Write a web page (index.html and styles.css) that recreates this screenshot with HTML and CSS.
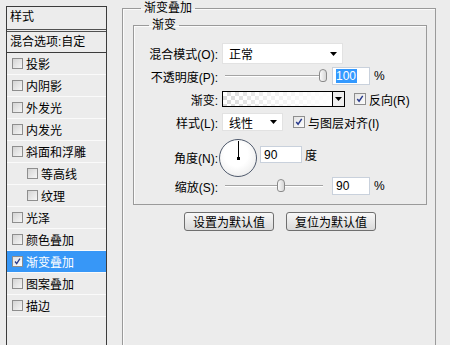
FILE: index.html
```html
<!DOCTYPE html>
<html>
<head>
    <meta charset="utf-8">
    <title>图层样式 - 渐变叠加</title>
    <link rel="stylesheet" href="styles.css">
</head>
<body>
    <div class="dialog">
        <!-- style list on the left -->
        <div class="style-list">
            <div class="list-head">样式</div>
            <div class="list-blend">混合选项:自定</div>
            <div class="list-item"><span class="check"></span>投影</div>
            <div class="list-item"><span class="check"></span>内阴影</div>
            <div class="list-item"><span class="check"></span>外发光</div>
            <div class="list-item"><span class="check"></span>内发光</div>
            <div class="list-item"><span class="check"></span>斜面和浮雕</div>
            <div class="list-item sub"><span class="check"></span>等高线</div>
            <div class="list-item sub"><span class="check"></span>纹理</div>
            <div class="list-item"><span class="check"></span>光泽</div>
            <div class="list-item"><span class="check"></span>颜色叠加</div>
            <div class="list-item active"><span class="check checked"><svg viewBox="0 0 11 11"><path d="M2.5 5.5 L4.5 8 L8.5 2" /></svg></span>渐变叠加</div>
            <div class="list-item"><span class="check"></span>图案叠加</div>
            <div class="list-item"><span class="check"></span>描边</div>
        </div>

        <!-- settings on the right -->
        <fieldset class="group outer">
            <legend>渐变叠加</legend>
            <fieldset class="group inner">
                <legend>渐变</legend>

                <div class="row r-blend">
                    <label class="lbl">混合模式(O):</label>
                    <div class="select wide">正常<svg class="arrow" viewBox="0 0 7 4"><polygon points="0,0 7,0 3.5,4" /></svg></div>
                </div>

                <div class="row r-opacity">
                    <label class="lbl">不透明度(P):</label>
                    <div class="slider"><div class="track"></div><div class="thumb" style="left: 97px"></div></div>
                    <div class="num"><span class="sel">100</span></div>
                    <span class="unit">%</span>
                </div>

                <div class="row r-gradient">
                    <label class="lbl">渐变:</label>
                    <div class="swatch"></div>
                    <div class="swatch-btn"><svg class="arrow" viewBox="0 0 7 4"><polygon points="0,0 7,0 3.5,4" /></svg></div>
                    <span class="check checked box12"><svg viewBox="0 0 11 11"><path d="M2.5 5.5 L4.5 8 L8.5 2" /></svg></span>
                    <span class="opt">反向(R)</span>
                </div>

                <div class="row r-style">
                    <label class="lbl">样式(L):</label>
                    <div class="select narrow">线性<svg class="arrow" viewBox="0 0 7 4"><polygon points="0,0 7,0 3.5,4" /></svg></div>
                    <span class="check checked box12 align"><svg viewBox="0 0 11 11"><path d="M2.5 5.5 L4.5 8 L8.5 2" /></svg></span>
                    <span class="opt">与图层对齐(I)</span>
                </div>

                <div class="row r-angle">
                    <label class="lbl">角度(N):</label>
                    <div class="dial"><div class="needle"></div><div class="hub"></div></div>
                    <div class="num angle">90</div>
                    <span class="unit">度</span>
                </div>

                <div class="row r-scale">
                    <label class="lbl">缩放(S):</label>
                    <div class="slider"><div class="track"></div><div class="thumb" style="left: 55px"></div></div>
                    <div class="num">90</div>
                    <span class="unit">%</span>
                </div>
            </fieldset>

            <div class="buttons">
                <button class="btn">设置为默认值</button>
                <button class="btn">复位为默认值</button>
            </div>
        </fieldset>
    </div>
</body>
</html>
```

FILE: styles.css
```css
* {
    box-sizing: border-box;
}

body {
    margin: 0;
    background: #ececec;
    color: #000;
    font-family: "Liberation Sans", "Noto Sans CJK SC", sans-serif;
    font-size: 12px;
    overflow: hidden;
    height: 345px;
}

.dialog {
    display: flex;
    align-items: flex-start;
    gap: 15px;
    padding-left: 6px;
}

/* ---- left list ---- */
.style-list {
    margin-top: 6px;
    width: 101px;
    height: 400px;
    border: 1px solid #3c3c3c;
    background: #ececec;
}

.list-head {
    height: 25px;
    line-height: 21px;
    padding-left: 3px;
    border-bottom: 3px double #505050;
}

.list-blend {
    height: 21px;
    line-height: 20px;
    padding-left: 3px;
    border-bottom: 1px solid #3c3c3c;
}

.list-item {
    display: flex;
    align-items: center;
    gap: 3px;
    height: 22px;
    padding-left: 5px;
    border-bottom: 1px solid #fafafa;
}

.list-item.sub {
    padding-left: 20px;
}

.list-item.active {
    background: #3797f7;
    color: #fff;
}

.check {
    display: inline-flex;
    width: 11px;
    height: 11px;
    border: 1px solid #8e8e8e;
    background: linear-gradient(135deg, #d4d4d4, #f6f6f6);
    flex: none;
}

.check svg {
    width: 100%;
    height: 100%;
    fill: none;
    stroke: #27398c;
    stroke-width: 1.6;
}

.check.checked {
    background: linear-gradient(135deg, #e4e4e4, #fcfcfc);
}

.box12 {
    width: 12px;
    height: 12px;
}

/* ---- group boxes ---- */
.group {
    margin: 0;
    border: 1px solid #9a9a9a;
    box-shadow: 1px 1px 0 #fbfbfb inset;
    min-width: 0;
}

.group legend {
    padding: 0 3px;
    line-height: 16px;
    height: 16px;
}

.outer {
    width: 314px;
    height: 420px;
    padding: 1px 8px 0 10px;
}

.outer > legend {
    margin-left: 8px;
}

.inner {
    width: 294px;
    padding: 10px 0 9px 0;
}

.inner > legend {
    margin-left: 15px;
}

/* ---- rows ---- */
.row {
    display: flex;
    align-items: center;
}

.lbl {
    width: 84px;
    margin-right: 4px;
    text-align: right;
    white-space: nowrap;
    flex: none;
}

.r-blend { height: 21px; }
.r-opacity { height: 18px; margin-top: 3px; }
.r-gradient { height: 16px; margin-top: 6px; }
.r-style { height: 18px; margin-top: 6px; }
.r-angle { height: 39px; margin-top: 7px; }
.r-scale { height: 18px; }

.select {
    display: flex;
    align-items: center;
    height: 100%;
    background: #fff;
    border: 1px solid #e2e2e2;
    padding-left: 6px;
}

.select.wide { width: 121px; }
.select.narrow { width: 61px; }

.arrow {
    width: 7px;
    height: 4px;
    fill: #000;
}

.select .arrow {
    margin-left: auto;
    margin-right: 5px;
}

.slider {
    position: relative;
    width: 107px;
    height: 18px;
    margin-right: 3px;
    flex: none;
}

.track {
    position: absolute;
    left: 3px;
    right: 6px;
    top: 8px;
    height: 2px;
    border-top: 1px solid #a4a4a4;
    border-bottom: 1px solid #fff;
}

.thumb {
    position: absolute;
    top: 2px;
    width: 8px;
    height: 13px;
    border: 1px solid #8a8a8a;
    border-radius: 4px 4px 3px 3px;
    background: linear-gradient(to right, #fafafa, #d6d6d6);
}

.num {
    width: 38px;
    height: 18px;
    background: #fff;
    border: 1px solid #c9d1dc;
    padding-left: 3px;
    line-height: 16px;
    flex: none;
}

.sel {
    background: #3399ff;
    color: #fff;
    padding-right: 1px;
}

.unit {
    margin-left: 4px;
}

.swatch {
    width: 111px;
    height: 16px;
    border: 1px solid #000;
    background:
        linear-gradient(to right, rgba(255, 255, 255, 0) 0%, rgba(255, 255, 255, 0.6) 40%, #fff 100%),
        repeating-conic-gradient(#d9d9d9 0 25%, #fff 0 50%) 0 0 / 8px 8px;
}

.swatch-btn {
    display: flex;
    align-items: center;
    justify-content: center;
    width: 12px;
    height: 16px;
    border: 1px solid #000;
    border-left: none;
    background: #efefef;
    margin-right: 9px;
}

.opt {
    margin-left: 3px;
}

.check.align {
    margin-left: 10px;
}

.dial {
    position: relative;
    width: 38px;
    height: 38px;
    margin-left: -3px;
    margin-right: 3px;
    border: 1px solid #4f5a6c;
    border-radius: 50%;
    background: radial-gradient(circle at 45% 40%, #ffffff 40%, #e4e4e4 100%);
    flex: none;
}

.needle {
    position: absolute;
    left: 18px;
    top: 1px;
    width: 1px;
    height: 17px;
    background: #000;
}

.hub {
    position: absolute;
    left: 17px;
    top: 17px;
    width: 3px;
    height: 3px;
    background: #000;
}

.num.angle {
    width: 42px;
    height: 17px;
    align-self: flex-start;
    margin-top: 8px;
}

.r-angle .unit {
    margin-top: -6px;
    margin-left: 3px;
}

/* ---- buttons ---- */
.buttons {
    display: flex;
    justify-content: center;
    gap: 12px;
    margin-top: 7px;
}

.btn {
    width: 90px;
    height: 19px;
    padding: 0;
    font: inherit;
    color: #000;
    border: 1px solid #6f6f6f;
    border-radius: 3px;
    background: linear-gradient(#f8f8f8, #dadada);
}
```
